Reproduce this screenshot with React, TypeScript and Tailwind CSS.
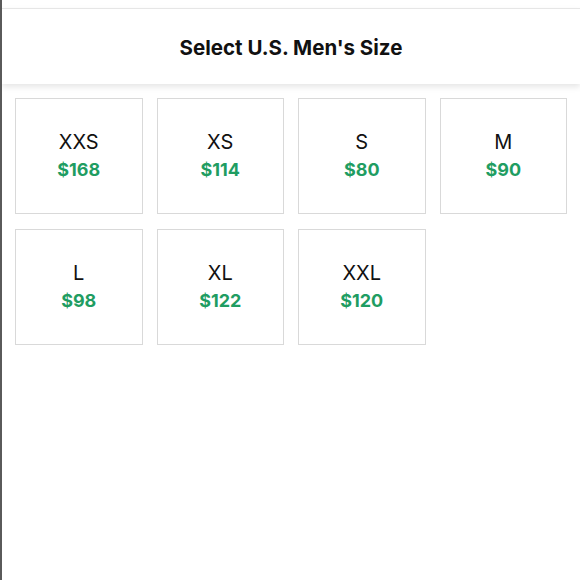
import React from 'react';

const sizes = [
  { label: 'XXS', price: '$168' },
  { label: 'XS', price: '$114' },
  { label: 'S', price: '$80' },
  { label: 'M', price: '$90' },
  { label: 'L', price: '$98' },
  { label: 'XL', price: '$122' },
  { label: 'XXL', price: '$120' },
];

export default function App() {
  return (
    <div className="w-[580px] h-[580px] bg-white border-l-2 border-[#5a5a5a] overflow-hidden" style={{ fontFamily: 'Inter, "Liberation Sans", sans-serif' }}>
      <div className="h-[8px]" />
      {/* Header */}
      <div className="h-[76px] pt-[4px] border-t border-[#e6e6e6] bg-white flex items-center justify-center shadow-[0_3px_6px_rgba(0,0,0,0.1)] relative z-10">
        <h1 className="text-[20.5px] font-bold text-[#111]">Select U.S. Men's Size</h1>
      </div>

      <div className="grid grid-cols-4 gap-x-[14px] gap-y-[15px] pl-[13px] pr-[13px] pt-[14px]">
        {sizes.map((s) => (
          <button key={s.label} className="h-[116px] border border-[#d9d9d9] bg-white flex flex-col items-center justify-center">
            <span className="text-[20px] text-[#111] leading-[26px]">{s.label}</span>
            <span className="text-[18px] font-bold text-[#1f9d62] leading-[26px] mt-[2px]">{s.price}</span>
          </button>
        ))}
      </div>
    </div>
  );
}
